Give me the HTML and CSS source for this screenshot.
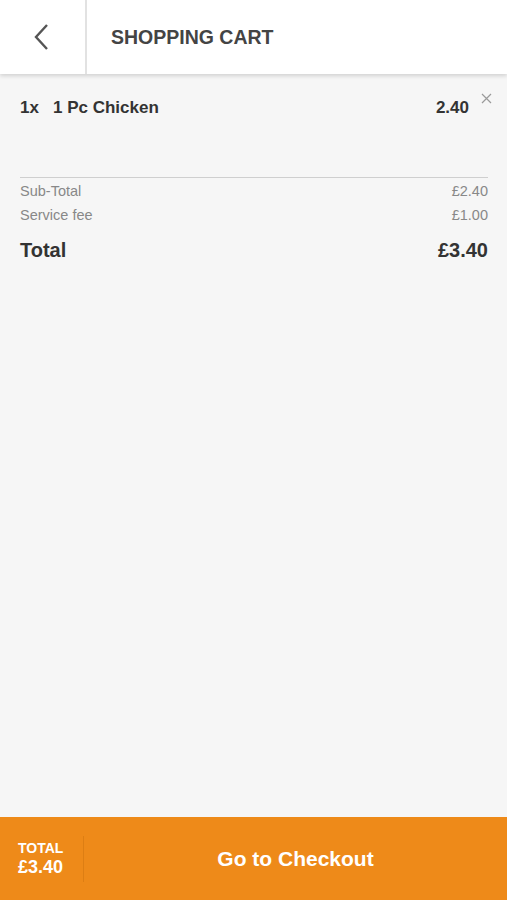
FILE: index.html
```html
<!DOCTYPE html>
<html lang="en">
<head>
    <meta charset="UTF-8">
    <meta name="viewport" content="width=device-width, initial-scale=1.0">
    <title>Shopping cart</title>
    <link rel="stylesheet" href="styles.css">
</head>
<body>
    <div class="cart_page">
        <div class="cart_header">
            <div class="back_btn">
                <svg width="18" height="28" viewBox="0 0 18 28"><path d="M15 2 L4 14 L15 26" fill="none" stroke="#555" stroke-width="2.4"/></svg>
            </div>
            <p class="cart_title">SHOPPING CART</p>
        </div>

        <div class="cart_body">
            <ul class="items">
                <li class="item">
                    <span class="qty">1x</span>
                    <span class="name">1 Pc Chicken</span>
                    <span class="price">2.40</span>
                    <span class="remove">
                        <svg width="11" height="11" viewBox="0 0 11 11"><path d="M1 1 L10 10 M10 1 L1 10" stroke="#9a9a9a" stroke-width="1.2"/></svg>
                    </span>
                </li>
            </ul>

            <div class="summary">
                <div class="row"><span>Sub-Total</span><span>£2.40</span></div>
                <div class="row"><span>Service fee</span><span>£1.00</span></div>
                <div class="row total"><span>Total</span><span>£3.40</span></div>
            </div>
        </div>

        <div class="cart_footer">
            <div class="footer_total">
                <span class="label">TOTAL</span>
                <span class="amount">£3.40</span>
            </div>
            <div class="checkout">Go to Checkout</div>
        </div>
    </div>
</body>
</html>
```

FILE: styles.css
```css
*{
    padding: 0;
    margin: 0;
    box-sizing: border-box;
}

body{
    font-family: "Liberation Sans", Arial, sans-serif;
    background: #f6f6f6;
}

.cart_page{
    width: 100vw;
    height: 100vh;
    display: flex;
    flex-direction: column;
}

.cart_header{
    display: flex;
    align-items: stretch;
    height: 74px;
    background: #fff;
    box-shadow: 0 2px 4px rgba(0,0,0,0.15);
    position: relative;
    z-index: 1;
}

.cart_header .back_btn{
    width: 87px;
    border-right: 2px solid #e2e2e2;
    display: flex;
    align-items: center;
    justify-content: center;
    padding-right: 3px;
}

.cart_header .cart_title{
    display: flex;
    align-items: center;
    padding-left: 24px;
    font-size: 19.5px;
    font-weight: 700;
    color: #444;
}

.cart_body{
    flex: 1;
    padding: 0 19px 0 20px;
}

.items{
    list-style: none;
    height: 104px;
    border-bottom: 1px solid #cfcfcf;
}

.item{
    display: flex;
    align-items: flex-start;
    padding-top: 24px;
    font-size: 17px;
    font-weight: 700;
    color: #333;
}

.item .qty{
    width: 33px;
}

.item .name{
    flex: 1;
}

.item .price{
    margin-right: 12px;
}

.item .remove{
    display: flex;
    margin-top: -5px;
    margin-right: -4px;
}

.summary{
    padding-top: 1px;
}

.summary .row{
    display: flex;
    justify-content: space-between;
    font-size: 14.5px;
    color: #888;
    line-height: 24px;
}

.summary .row.total{
    margin-top: 10px;
    font-size: 20px;
    font-weight: 700;
    color: #333;
    line-height: 26px;
}

.cart_footer{
    height: 83px;
    background: #ee8a19;
    display: flex;
    align-items: center;
    color: #fff;
    font-weight: 700;
}

.footer_total{
    width: 84px;
    height: 46px;
    padding-left: 18px;
    border-right: 1px solid #dd7e13;
    display: flex;
    flex-direction: column;
    justify-content: center;
}

.footer_total .label{
    font-size: 14px;
    line-height: 17px;
}

.footer_total .amount{
    font-size: 18px;
    line-height: 21px;
}

.checkout{
    flex: 1;
    text-align: center;
    font-size: 21px;
}
```
